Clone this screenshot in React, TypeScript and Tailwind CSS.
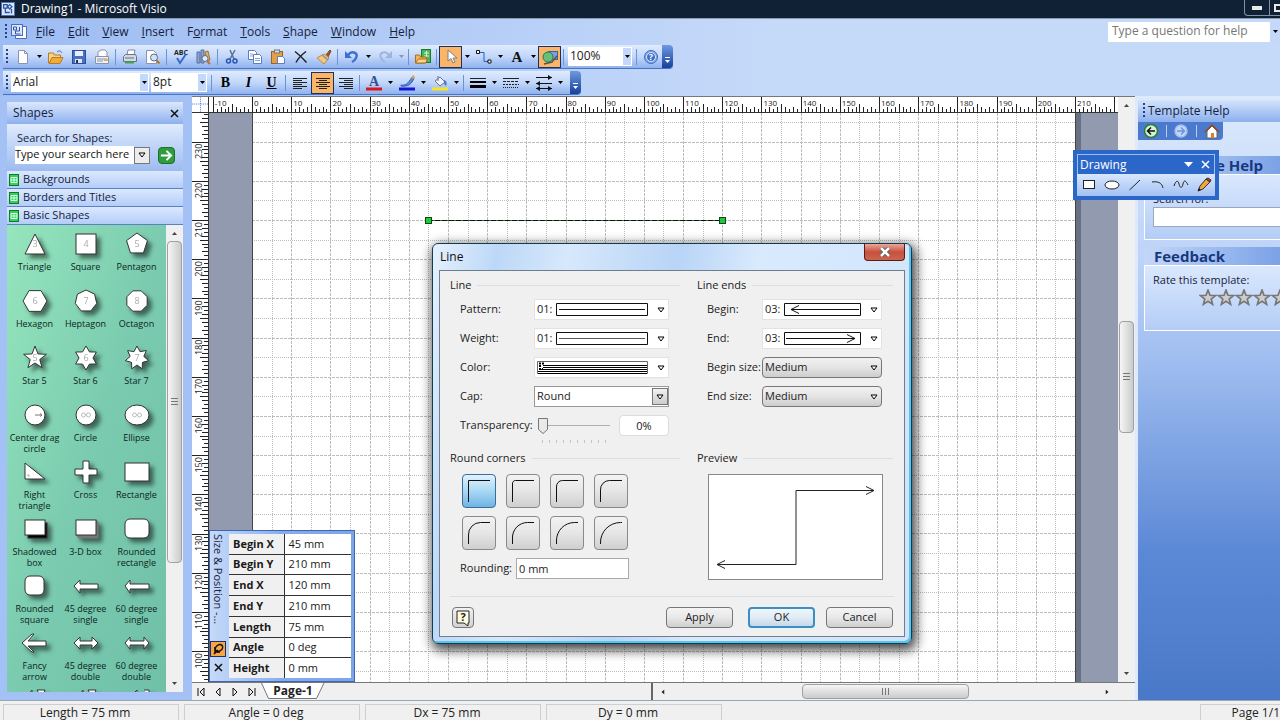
import type { ReactNode } from 'react';
import clsx from 'clsx';

const menus = ['File', 'Edit', 'View', 'Insert', 'Format', 'Tools', 'Shape', 'Window', 'Help'];

const ngon = (n: number, r = 11, cx = 16, cy = 16, offset = -90) =>
  Array.from({ length: n }, (_, i) => {
    const a = ((offset + (360 / n) * i) * Math.PI) / 180;
    return `${(cx + r * Math.cos(a)).toFixed(2)},${(cy + r * Math.sin(a)).toFixed(2)}`;
  }).join(' ');

const star = (n: number, outer: number, inner: number) =>
  Array.from({ length: n * 2 }, (_, i) => {
    const r = i % 2 ? inner : outer;
    const a = ((-90 + (180 / n) * i) * Math.PI) / 180;
    return `${(16 + r * Math.cos(a)).toFixed(2)},${(16 + r * Math.sin(a)).toFixed(2)}`;
  }).join(' ');

const Num = ({ children }: { children: ReactNode }) => (
  <text x="16" y="19" textAnchor="middle" fontSize="9" fill="#aaa" stroke="none">
    {children}
  </text>
);

const masters: { label: string; art: ReactNode }[] = [
  { label: 'Triangle', art: <><polygon points="16,6 26,26 6,26" /><Num>3</Num></> },
  { label: 'Square', art: <><rect x="6" y="6" width="20" height="20" /><Num>4</Num></> },
  { label: 'Pentagon', art: <><polygon points={ngon(5)} /><Num>5</Num></> },
  { label: 'Hexagon', art: <><polygon points={ngon(6, 12, 16, 16, 0)} /><Num>6</Num></> },
  { label: 'Heptagon', art: <><polygon points={ngon(7)} /><Num>7</Num></> },
  { label: 'Octagon', art: <><polygon points={ngon(8, 11, 16, 16, 22.5)} /><Num>8</Num></> },
  { label: 'Star 5', art: <><polygon points={star(5, 12, 5)} /><Num>5</Num></> },
  { label: 'Star 6', art: <><polygon points={star(6, 12, 7)} /><Num>6</Num></> },
  { label: 'Star 7', art: <><polygon points={star(7, 12, 7)} /><Num>7</Num></> },
  { label: 'Center drag\ncircle', art: <><circle cx="16" cy="16" r="10" /><path d="M16 16h7M21 14.500l2 1.500-2 1.500" stroke="#777" /></> },
  { label: 'Circle', art: <><circle cx="16" cy="16" r="10" /><g stroke="#bbb"><circle cx="13.500" cy="16" r="2" /><circle cx="18.500" cy="16" r="2" /></g></> },
  { label: 'Ellipse', art: <><ellipse cx="16" cy="16" rx="12" ry="10" /><g stroke="#bbb"><circle cx="13.500" cy="16" r="2" /><circle cx="18.500" cy="16" r="2" /></g></> },
  { label: 'Right\ntriangle', art: <><path d="M6 7v16h20Z" /><path d="M8 19h2v2" stroke="#aaa" /></> },
  { label: 'Cross', art: <path d="M13 5h6v8h8v6h-8v8h-6v-8H5v-6h8Z" /> },
  { label: 'Rectangle', art: <rect x="4" y="7" width="24" height="18" /> },
  { label: 'Shadowed\nbox', art: <><rect x="9" y="10" width="19" height="15" fill="#000" /><rect x="6" y="7" width="20" height="15" /></> },
  { label: '3-D box', art: <><path d="M6 22l3 3h19V9l-2-2Z" fill="#777" stroke="#777" /><rect x="6" y="7" width="20" height="15" /></> },
  { label: 'Rounded\nrectangle', art: <rect x="4" y="6" width="24" height="19" rx="5" /> },
  { label: 'Rounded\nsquare', art: <rect x="6" y="6" width="19" height="19" rx="5" /> },
  { label: '45 degree\nsingle', art: <path d="M4 16l6-6v4h18v5H10v4Z" /> },
  { label: '60 degree\nsingle', art: <path d="M4 16l5-6v4h19v5H9v4Z" /> },
  { label: 'Fancy\narrow', art: <path d="M3 16l10-9h2l-6 7h18v5H9l6 6h-2Z" /> },
  { label: '45 degree\ndouble', art: <path d="M4 16l6-6v4h12v-4l6 6-6 6v-4H10v4Z" /> },
  { label: '60 degree\ndouble', art: <path d="M4 16l5-6v4h14v-4l5 6-5 6v-4H9v4Z" /> },
  { label: '', art: <path d="M7 14l6-8v9M18 6h8l-3 8Z" /> },
  { label: '', art: <path d="M7 14l6-8v9M18 6h8l-3 8Z" /> },
  { label: '', art: <path d="M10 12l6-6v5M23 6h5v6" /> },
];

const sizeRows = [
  ['Begin X', '45 mm'],
  ['Begin Y', '210 mm'],
  ['End X', '120 mm'],
  ['End Y', '210 mm'],
  ['Length', '75 mm'],
  ['Angle', '0 deg'],
  ['Height', '0 mm'],
];

const statusCells = ['Length = 75 mm', 'Angle = 0 deg', 'Dx = 75 mm', 'Dy = 0 mm'];

// pixels per millimetre on the drawing surface
const MM = 3.919;

const Caret = ({ className }: { className?: string }) => (
  <svg viewBox="0 0 7 4" className={clsx('h-1 w-[7px] shrink-0', className)}>
    <path d="M1 0h5L3.500 3Z" fill="currentColor" />
  </svg>
);

const OpenCaret = ({ className }: { className?: string }) => (
  <svg viewBox="0 0 8 6" className={clsx('h-1.5 w-2 shrink-0', className)}>
    <path d="M1 1h6L4 5Z" fill="#fff" stroke="#000" />
  </svg>
);

const Grip = () => (
  <svg viewBox="0 0 2 16" className="mx-[3px] h-4 w-0.5 shrink-0">
    <path d="M1 0v16" stroke="#27437d" strokeWidth="2" strokeDasharray="2 2" />
  </svg>
);

const Sep = () => (
  <div className="flex w-[5px] shrink-0 justify-center">
    <div className="h-4 w-px bg-[#6f93d2]" />
  </div>
);

const Tool = ({ name, active, children }: { name: string; active?: boolean; children: ReactNode }) => (
  <button
    aria-label={name}
    className={clsx(
      'flex h-[22px] w-[23px] shrink-0 items-center justify-center',
      active && 'border border-[#1c2f66] bg-[#fbb566]',
    )}
  >
    <svg viewBox="0 0 16 16" className="size-4 shrink-0" fill="none" stroke="#222">
      {children}
    </svg>
  </button>
);

const Drop = ({ name, dim }: { name: string; dim?: boolean }) => (
  <button
    aria-label={name}
    className={clsx('flex h-[22px] w-2.5 shrink-0 items-center justify-center', dim ? 'text-[#8796b5]' : 'text-black')}
  >
    <Caret />
  </button>
);

const BarCombo = ({ name, value, className }: { name: string; value: string; className: string }) => (
  <div className={clsx('relative h-[19px] shrink-0 bg-white', className)}>
    <select
      aria-label={name}
      className="block h-[17px] w-full appearance-none bg-transparent px-0.5 py-0 text-xs leading-4 text-[#222] outline-none"
    >
      <option>{value}</option>
    </select>
    <div className="pointer-events-none absolute inset-y-0 right-0 flex w-2.5 items-center justify-center border border-white bg-[#c3d8fa]">
      <Caret />
    </div>
  </div>
);

const BarEnd = () => (
  <div className="ml-auto flex w-[11px] shrink-0 flex-col items-center justify-end gap-0.5 self-stretch rounded-r-sm bg-gradient-to-b from-[#7098e0] to-[#16409b] pb-1 text-white">
    <div className="h-px w-[5px] bg-white" />
    <Caret />
  </div>
);

const barClass =
  'flex h-6 items-center rounded-r-sm border-b border-[#4a73c4] bg-gradient-to-b from-[#dfebfe] via-[#c2d7fa] to-[#8fb2ee]';

const StandardBar = () => (
  <div className={clsx(barClass, 'w-[670px]')}>
    <Grip />
    <Tool name="New">
      <path d="M3.500 1.500h6l3 3v10h-9Z" fill="#fff" stroke="#8a94ab" />
      <path d="M9.500 1.500v3h3" stroke="#8a94ab" />
    </Tool>
    <Drop name="New options" />
    <Tool name="Open">
      <path d="M.5 14V4h5l1 2h6v3" fill="#f6d487" stroke="#b87a1f" />
      <path d="M1 14.500l3-6h11l-3 6Z" fill="#f3a93c" stroke="#b87a1f" />
      <path d="M9 3c2-2 4-1 5 1" stroke="#3b67b8" />
    </Tool>
    <Tool name="Save">
      <rect x="1.500" y="1.500" width="13" height="13" fill="#4870c4" stroke="#2d4f9b" />
      <rect x="4" y="2" width="8" height="5" fill="#e8effc" stroke="none" />
      <rect x="4" y="10" width="7" height="4" fill="#dfe4ee" stroke="none" />
      <rect x="5" y="11" width="2" height="3" fill="#234" stroke="none" />
    </Tool>
    <Tool name="Mail">
      <path d="M1.500 7.500h13v7h-13Z" fill="#eef1f8" stroke="#8993ab" />
      <path d="M4 7V3l3-2h4l2 2v4" fill="#fff" stroke="#8993ab" />
      <path d="M3 10h10M3 12h6" stroke="#8993ab" />
      <path d="M10 11h4" stroke="#e2b252" strokeWidth="2" />
    </Tool>
    <Sep />
    <Tool name="Print">
      <path d="M5 6l1-5h7l-1 5" fill="#fff" stroke="#7d89a3" />
      <path d="M1.500 7.500l2-2h10l1 2v5h-13Z" fill="#d4d8e2" stroke="#66718a" />
      <path d="M3 13.500h9" stroke="#3ca54a" strokeWidth="2" />
      <path d="M3 9h9" stroke="#66718a" />
    </Tool>
    <Tool name="Print Preview">
      <path d="M1.500 1.500h7l3 3v10h-10Z" fill="#fff" stroke="#8a94ab" />
      <circle cx="9" cy="8.500" r="3.500" fill="#cfe3fb" stroke="#5c6c8f" />
      <path d="M11.500 11.500l3 3" stroke="#b9712d" strokeWidth="2" />
    </Tool>
    <Sep />
    <Tool name="Spelling">
      <text x="8" y="6" textAnchor="middle" fontSize="7" fontWeight="700" fill="#222" stroke="none">ABC</text>
      <path d="M4 9l3 5 6-9" stroke="#3a68c9" strokeWidth="2" />
    </Tool>
    <Tool name="Research">
      <path d="M1 3h3v11H1ZM5 1h3v13H5Z" fill="#8aa3cf" stroke="#5a6f9c" />
      <path d="M9 3l3-1 2 9-3 1Z" fill="#e0b06a" stroke="#9b7438" />
      <circle cx="9" cy="9.500" r="3" fill="#dbe9fb" stroke="#5c6c8f" />
      <path d="M11 12l3 3" stroke="#b9712d" strokeWidth="2" />
    </Tool>
    <Sep />
    <Tool name="Cut">
      <path d="M6 1l4 9M11 1l-5 9" stroke="#5b6f98" strokeWidth="1.500" />
      <circle cx="4.500" cy="12" r="2" stroke="#2a55b5" strokeWidth="1.500" />
      <circle cx="11" cy="12" r="2" stroke="#2a55b5" strokeWidth="1.500" />
    </Tool>
    <Tool name="Copy">
      <path d="M1.500 1.500h6l2 2v7h-8Z" fill="#fff" stroke="#5f7db8" />
      <path d="M6.500 5.500h6l2 2v7h-8Z" fill="#fff" stroke="#5f7db8" />
      <path d="M3 5h3M3 7h3M8 9.500h5M8 11.500h5" stroke="#86a2dc" />
    </Tool>
    <Tool name="Paste">
      <rect x="1.500" y="2.500" width="11" height="12" fill="#e2a049" stroke="#9c6320" />
      <rect x="4.500" y="1" width="5" height="3" fill="#d9dbe2" stroke="#777" />
      <path d="M7.500 7.500h5l2 2v5h-7Z" fill="#fff" stroke="#5f7db8" />
    </Tool>
    <Tool name="Delete">
      <path d="M2 2.500c4 3 8 7 11.500 11M13 2.500c-4 3-8 7-10 11" stroke="#222" strokeWidth="1.500" />
    </Tool>
    <Tool name="Format Painter">
      <path d="M10 6l4-5 1 1-3 6" fill="#9b5c25" stroke="#7b4719" />
      <path d="M8 5l5 4-5 6-7-6Z" fill="#f3c878" stroke="#c38b3b" />
      <path d="M6 6l6 5" stroke="#8291b3" strokeWidth="1.500" />
    </Tool>
    <Sep />
    <Tool name="Undo">
      <path d="M4 6c4-5 11-2 8 3-1 2-2 3-4 4" stroke="#3f6fd0" strokeWidth="2.500" />
      <path d="M1 2v7h7Z" fill="#3f6fd0" stroke="none" />
    </Tool>
    <Drop name="Undo options" />
    <Tool name="Redo">
      <path d="M12 6c-4-5-11-2-8 3 1 2 2 3 4 4" stroke="#9fb4da" strokeWidth="2" />
      <path d="M15 2v7H8Z" fill="#9fb4da" stroke="none" />
    </Tool>
    <Drop name="Redo options" dim />
    <Sep />
    <Tool name="Shapes">
      <rect x="6.500" y=".5" width="9" height="13" fill="#49b857" stroke="#1d7a2c" />
      <path d="M9 4h5M9 7h5M11.500 2v7" stroke="#dff5e2" />
      <path d="M.5 14V6h4l1 2h6l-1 6Z" fill="#f3b455" stroke="#a96e1d" />
      <path d="M.5 14l3-4h9l-2 4Z" fill="#fad590" stroke="#a96e1d" />
    </Tool>
    <Sep />
    <Tool name="Pointer Tool" active>
      <path d="M5 1v11l3-2.500 2 4.500 2-1-2-4h4Z" fill="#fff" stroke="#7c7f8c" />
    </Tool>
    <Drop name="Pointer options" />
    <Tool name="Connector Tool">
      <path d="M4 3.500h4v9h4" stroke="#2b5ec4" />
      <path d="M.5 1.500h3v3h-3ZM12 11h3v3h-3Z" fill="#fff" stroke="#111" />
    </Tool>
    <Drop name="Connector options" />
    <Tool name="Text Tool">
      <text x="8" y="13" textAnchor="middle" fontFamily="Liberation Serif, serif" fontWeight="700" fontSize="15" fill="#111" stroke="none">A</text>
    </Tool>
    <Drop name="Text options" />
    <Tool name="Drawing Tools" active>
      <rect x="6.500" y="2.500" width="9" height="8" fill="#7d9fdf" stroke="#3c5fa8" />
      <circle cx="6" cy="8" r="5" fill="#66bf7c" stroke="#2c7b42" />
      <path d="M2 15l8-2 5-6" stroke="#555" strokeWidth="1.500" />
    </Tool>
    <Sep />
    <BarCombo name="Zoom" value="100%" className="mx-0.5 w-16" />
    <Sep />
    <Tool name="Help">
      <circle cx="8" cy="8" r="6.500" fill="#7fa6ea" stroke="#416cc0" />
      <circle cx="8" cy="8" r="4.500" fill="#3f6dca" stroke="#dce8fc" />
      <text x="8" y="11" textAnchor="middle" fontSize="9" fontWeight="700" fill="#fff" stroke="none">?</text>
    </Tool>
    <BarEnd />
  </div>
);

const FormattingBar = () => (
  <div className={clsx(barClass, 'w-[578px]')}>
    <Grip />
    <BarCombo name="Font" value="Arial" className="w-[138px]" />
    <BarCombo name="Font Size" value="8pt" className="ml-0.5 mr-0.5 w-14" />
    <Sep />
    <button className="w-[23px] shrink-0 text-sm font-bold [font-family:'Liberation_Serif',serif]">B</button>
    <button className="w-[23px] shrink-0 text-sm font-bold italic [font-family:'Liberation_Serif',serif]">I</button>
    <button className="w-[23px] shrink-0 text-sm font-bold underline [font-family:'Liberation_Serif',serif]">U</button>
    <Sep />
    <Tool name="Align Left">
      <path d="M1 3.500h14M1 5.500h9M1 7.500h14M1 9.500h9M1 11.500h14M1 13.500h9" />
    </Tool>
    <Tool name="Align Center" active>
      <path d="M1 3.500h14M4 5.500h8M1 7.500h14M4 9.500h8M1 11.500h14M4 13.500h8" />
    </Tool>
    <Tool name="Align Right">
      <path d="M1 3.500h14M6 5.500h9M1 7.500h14M6 9.500h9M1 11.500h14M6 13.500h9" />
    </Tool>
    <Sep />
    <Tool name="Text Color">
      <text x="8" y="11" textAnchor="middle" fontFamily="Liberation Serif, serif" fontSize="14" fontWeight="700" fill="#33508f" stroke="none">A</text>
      <path d="M0 14h16" stroke="#e01515" strokeWidth="3" />
    </Tool>
    <Drop name="Text color options" />
    <Tool name="Line Color">
      <path d="M2 10c4 1 7-1 11-8l2 1c-2 6-6 9-13 8Z" fill="#5c8be0" stroke="#345fb2" />
      <path d="M12 3l2-3 2 2-2 2" fill="#dca050" stroke="none" />
      <path d="M0 14h16" stroke="#1414dc" strokeWidth="3" />
    </Tool>
    <Drop name="Line color options" />
    <Tool name="Fill Color">
      <path d="M3 6l5-4 5 5-5 4Z" fill="#eef2fa" stroke="#68738f" />
      <path d="M6 6V1" stroke="#68738f" />
      <path d="M12 5c3 1 3 3 2 6-2-1-2-3-2-6Z" fill="#4674cf" stroke="none" />
      <path d="M0 14h16" stroke="#f6e227" strokeWidth="3" />
    </Tool>
    <Drop name="Fill color options" />
    <Sep />
    <Tool name="Line Weight">
      <path d="M0 3.500h16" />
      <path d="M0 7h16" strokeWidth="2" stroke="#000" />
      <path d="M0 11.500h16" strokeWidth="3" stroke="#000" />
    </Tool>
    <Drop name="Line weight options" />
    <Tool name="Line Pattern">
      <path d="M0 3.500h16" />
      <path d="M0 6.500h16" strokeDasharray="3 1" />
      <path d="M0 9.500h16" strokeDasharray="2 1" />
      <path d="M0 12.500h16" strokeDasharray="1 1" />
    </Tool>
    <Drop name="Line pattern options" />
    <Tool name="Line Ends">
      <path d="M0 2.500h16M0 8.500h16M0 13.500h16" stroke="#111" />
      <path d="M12 0v5l4-2.500ZM4 6v5L0 8.500ZM4 11v5l-4-2.500ZM12 11v5l4-2.500Z" fill="#111" stroke="none" />
    </Tool>
    <Drop name="Line ends options" />
    <BarEnd />
  </div>
);

const StencilIcon = () => (
  <svg viewBox="0 0 10 12" className="h-3 w-2.5">
    <rect x=".5" y=".5" width="9" height="11" fill="#2fd35c" stroke="#0d7a2b" />
    <path d="M2 3.500h6v5H2ZM5 3.500v5M2 6h6" stroke="#e4ffe9" fill="none" />
  </svg>
);

const VScroll = ({ thumb }: { thumb: string }) => (
  <div className="flex w-[17px] shrink-0 flex-col items-center bg-[#f0f0f0] text-[#444]">
    <div className="flex h-4 items-center">
      <Caret className="rotate-180" />
    </div>
    <div className={clsx('flex w-[15px] items-center justify-center rounded-sm border border-[#a0a0a0] bg-gradient-to-r from-[#f6f6f6] to-[#cbcbcb]', thumb)}>
      <svg viewBox="0 0 7 8" className="h-2 w-[7px]">
        <path d="M0 .5h7M0 3.500h7M0 6.500h7" stroke="#777" />
      </svg>
    </div>
    <div className="mt-auto flex h-4 items-center">
      <Caret />
    </div>
  </div>
);

const ShapesPanel = () => (
  <aside className="flex w-44 shrink-0 flex-col">
    <header className="flex h-[22px] shrink-0 items-center justify-between bg-gradient-to-b from-[#dbe8fd] to-[#8db0ee] pl-1.5 pr-1 text-xs text-[#16233d]">
      <span>Shapes</span>
      <button aria-label="Close Shapes">
        <svg viewBox="0 0 9 9" className="size-[9px]">
          <path d="M1 1l7 7M8 1L1 8" stroke="#111" strokeWidth="1.500" />
        </svg>
      </button>
    </header>
    <div className="flex h-[47px] shrink-0 flex-col bg-gradient-to-b from-[#dfebfe] to-[#9dbbf0] px-2 pt-1.5">
      <label htmlFor="shape-search" className="px-0.5 text-[11px] leading-4 text-[#16233d]">
        Search for Shapes:
      </label>
      <div className="flex h-[18px] items-center">
        <input
          id="shape-search"
          defaultValue="Type your search here"
          className="h-[18px] w-[119px] bg-white pb-1 text-[11px] leading-[14px] text-[#111] outline-none"
        />
        <button aria-label="Recent searches" className="flex h-[17px] w-4 items-center justify-center border border-[#777] bg-[#ececec]">
          <OpenCaret />
        </button>
        <button aria-label="Search" className="ml-2 size-[17px] rounded-sm border border-[#1c6e28] bg-[#2f9d3e]">
          <svg viewBox="0 0 16 16" className="size-full" fill="none" stroke="#fff" strokeWidth="2">
            <path d="M2 8h11M8 3l5 5-5 5" />
          </svg>
        </button>
      </div>
    </div>
    {['Backgrounds', 'Borders and Titles', 'Basic Shapes'].map((name) => (
      <button
        key={name}
        className="flex h-[18px] shrink-0 items-center gap-1 border-b border-[#5b80c4] bg-gradient-to-b from-[#dce9fe] to-[#b3cdf8] px-0.5 text-[11px] text-[#14223c]"
      >
        <StencilIcon />
        {name}
      </button>
    ))}
    <div className="flex min-h-0 flex-1">
      <ul className="grid min-w-0 flex-1 auto-rows-[57px] grid-cols-3 overflow-hidden bg-gradient-to-br from-[#95e6bd] via-[#7bcbb0] to-[#70c0a8] pl-0.5 pr-1">
        {masters.map((m, i) => (
          <li key={i} className="flex flex-col items-center pt-[3px]">
            <svg
              viewBox="0 0 32 32"
              className="size-8 shrink-0 overflow-visible drop-shadow-[4px_4px_2px_rgba(0,0,0,0.5)]"
              fill="#fff"
              stroke="#333"
            >
              {m.art}
            </svg>
            <span className="whitespace-pre pt-px text-center text-[9px] leading-[11px] text-[#0c241c]">{m.label}</span>
          </li>
        ))}
      </ul>
      <VScroll thumb="h-[322px]" />
    </div>
  </aside>
);

const HRuler = () => (
  <svg width="100%" height="100%" stroke="#222" className="block" shapeRendering="crispEdges">
    {Array.from({ length: 231 }, (_, i) => {
      const mm = i - 10;
      const x = 43.5 + mm * MM;
      const len = mm % 10 === 0 ? 16 : mm % 5 === 0 ? 9 : i % 2 ? 4 : 6;
      return <path key={mm} d={`M${x} ${16 - len}V16`} />;
    })}
    {Array.from({ length: 23 }, (_, i) => (
      <text key={i} x={45 + (i - 1) * 10 * MM} y="9" fontSize="8" fill="#222" stroke="none">
        {(i - 1) * 10}
      </text>
    ))}
  </svg>
);

const VRuler = () => (
  <svg width="100%" height="100%" stroke="#222" className="block" shapeRendering="crispEdges">
    {Array.from({ length: 150 }, (_, i) => {
      const mm = 238 - i;
      const y = 107.5 + (210 - mm) * MM;
      const len = mm % 10 === 0 ? 17 : mm % 5 === 0 ? 9 : i % 2 ? 5 : 7;
      return <path key={mm} d={`M${17 - len} ${y}H17`} />;
    })}
    {Array.from({ length: 14 }, (_, i) => {
      const mm = 230 - i * 10;
      const y = 109 + (210 - mm) * MM;
      return (
        <text key={mm} transform={`translate(10 ${y}) rotate(-90)`} textAnchor="end" fontSize="9" fill="#222" stroke="none">
          {mm}
        </text>
      );
    })}
  </svg>
);

const Canvas = () => (
  <svg width="100%" height="100%" className="block bg-[#929ab0]" shapeRendering="crispEdges">
    <rect x="866" width="6" height="100%" fill="#6a7084" />
    <rect x="43" width="823" height="100%" fill="#fff" />
    {Array.from({ length: 41 }, (_, i) => {
      const x = 43.5 + (i + 1) * 5 * MM;
      return <line key={i} x1={x} x2={x} y1="0" y2="100%" stroke="#bdbdbd" strokeDasharray={i % 2 ? '3 1' : '1 1'} />;
    })}
    {Array.from({ length: 29 }, (_, i) => {
      const y = 9.5 + i * 5 * MM;
      return <line key={i} x1="43" x2="866" y1={y} y2={y} stroke="#bdbdbd" strokeDasharray={i % 2 ? '3 1' : '1 1'} />;
    })}
    <path d="M43.500 0V1000M866.500 0V1000" stroke="#444" />
    <path d="M219 107.500H514" stroke="#1a7a2a" />
    <path d="M219 107.500H514" stroke="#111" strokeDasharray="5 2" />
    <path d="M216.500 104.500h6v6h-6ZM510.500 104.500h6v6h-6Z" fill="#1fc83c" stroke="#0b4a16" />
  </svg>
);

const SizePosition = () => (
  <section className="absolute bottom-0 left-0 flex h-[152px] w-[146px] border border-[#3f66b5] bg-gradient-to-r from-[#c6daf9] via-[#86adeb] to-[#7ba5e8] py-[3px] pr-[3px]">
    <div className="flex w-4 flex-col items-center justify-between">
      <h2 className="text-[11px] leading-4 text-[#16233d] [writing-mode:vertical-rl]">Size &amp; Position -...</h2>
      <button aria-label="Auto hide" className="mt-auto flex size-4 shrink-0 items-center justify-center border border-[#1c2f66] bg-[#f7a544]">
        <svg viewBox="0 0 12 12" className="size-3" fill="none" stroke="#111" strokeWidth="1.500">
          <ellipse cx="7" cy="5" rx="4" ry="3" transform="rotate(-40 7 5)" />
          <path d="M2 11l4-4M3 4v5h5" />
        </svg>
      </button>
      <button aria-label="Close" className="my-1.5">
        <svg viewBox="0 0 9 9" className="size-[9px]">
          <path d="M1 1l7 7M8 1L1 8" stroke="#111" strokeWidth="1.500" />
        </svg>
      </button>
    </div>
    <table className="ml-[3px] flex-1 border-collapse bg-white text-[11px] leading-4 text-[#1a1a1a]">
      <tbody>
        {sizeRows.map(([label, value]) => (
          <tr key={label} className="border-b border-[#333] last:border-b-0">
            <th scope="row" className="w-[55px] border-r border-[#333] bg-[#f0f0f0] px-1 py-0 text-left font-bold">
              {label}
            </th>
            <td className="px-1 py-0">{value}</td>
          </tr>
        ))}
      </tbody>
    </table>
  </section>
);

const PageTabs = () => (
  <div className="flex h-[18px] shrink-0 items-stretch border-t border-[#777] bg-[#f0f0f0]">
    <div className="flex w-[69px] items-center justify-around">
      {['M2 1v8M8 1v8L4 5Z', 'M7 1v8L3 5Z', 'M3 1v8l4-4Z', 'M8 1v8M2 1v8l4-4Z'].map((d, i) => (
        <button key={d} aria-label={['First page', 'Previous page', 'Next page', 'Last page'][i]}>
          <svg viewBox="0 0 10 10" className="size-2.5" fill="none" stroke="#111">
            <path d={d} />
          </svg>
        </button>
      ))}
    </div>
    <button className="relative h-4 w-16 text-xs font-bold leading-4 text-[#222]">
      <svg viewBox="0 0 64 16" className="absolute inset-0 size-full">
        <path d="M.5 0l7 15.500h48L63 0" fill="#fff" stroke="#777" />
      </svg>
      <span className="relative">Page-1</span>
    </button>
    <div className="ml-auto flex w-[466px] items-center border-l-2 border-[#666] px-1.5 text-[#222]">
      <Caret className="rotate-90" />
      <div className="ml-[136px] flex h-[15px] w-[167px] items-center justify-center rounded-sm border border-[#a0a0a0] bg-gradient-to-b from-[#f6f6f6] to-[#cbcbcb]">
        <svg viewBox="0 0 8 7" className="h-[7px] w-2">
          <path d="M.5 0v7M3.500 0v7M6.500 0v7" stroke="#777" />
        </svg>
      </div>
      <Caret className="ml-auto -rotate-90" />
    </div>
    <div className="w-[18px]" />
  </div>
);

const Pane = ({ title, children }: { title: string; children: ReactNode }) => (
  <section className="ml-1.5">
    <h2 className="h-[18px] bg-gradient-to-r from-[#c3d7f8] to-[#7ba2e6] pl-2.5 text-[15px] font-bold leading-[18px] text-[#17377f]">
      {title}
    </h2>
    <div className="h-[66px] border-y border-l border-white bg-gradient-to-b from-[#dae8fd] to-[#b4cdf6] pl-2 text-[11px] text-[#16233d]">
      {children}
    </div>
  </section>
);

const TaskPane = () => (
  <aside className="flex min-w-0 flex-1 flex-col overflow-hidden border-l-[3px] border-[#dce9fe] bg-[linear-gradient(#dceafc,#b9d0f7_30%,#a3c0f1_42%,#5c89d6_75%,#4a78c8)]">
    <header className="mt-1 flex h-[22px] shrink-0 items-center bg-gradient-to-b from-[#d5e4fc] to-[#8bafee] pl-0.5 text-xs text-[#16233d]">
      <Grip />
      Template Help
    </header>
    <div className="flex h-[18px] w-[85px] shrink-0 items-center justify-around rounded-br bg-[#4b79cb] pl-0.5">
      <button aria-label="Back">
        <svg viewBox="0 0 16 16" className="size-4" fill="none" stroke="#111" strokeWidth="1.500">
          <circle cx="8" cy="8" r="6.500" fill="#d7f2d4" stroke="#2b7d35" />
          <path d="M12 8H5M8 4.500L4.500 8 8 11.500" />
        </svg>
      </button>
      <div className="h-3 w-px bg-[#b8cff5]" />
      <button aria-label="Forward">
        <svg viewBox="0 0 16 16" className="size-4" fill="none" stroke="#6d93d8" strokeWidth="1.500">
          <circle cx="8" cy="8" r="6" fill="#c4d6f5" stroke="#a4bfed" />
          <path d="M4 8h7M8 4.500L11.500 8 8 11.500" />
        </svg>
      </button>
      <div className="h-3 w-px bg-[#b8cff5]" />
      <button aria-label="Home">
        <svg viewBox="0 0 16 16" className="size-4">
          <path d="M3 8v7h10V8L8 3Z" fill="#fff" stroke="#666" />
          <path d="M1 9l7-7 7 7" fill="none" stroke="#8f4c24" strokeWidth="1.500" />
          <path d="M7 10h3v5H7Z" fill="#d9822d" />
        </svg>
      </button>
    </div>
    <div className="mt-4 flex flex-col gap-[7px]">
      <Pane title="Template Help">
        <label htmlFor="help-search" className="block pt-4 leading-4">
          Search for:
        </label>
        <input id="help-search" className="h-5 w-full border border-r-0 border-[#9aa7bf] bg-white px-1" />
      </Pane>
      <Pane title="Feedback">
        <p className="pt-1.5 leading-4">Rate this template:</p>
        <div className="ml-[46px] mt-px flex w-[90px]">
          {[1, 2, 3, 4, 5].map((n) => (
            <button key={n} aria-label={`${n} stars`} className="w-[18px] shrink-0">
              <svg viewBox="0 0 32 32" className="size-[18px]">
                <polygon points={star(5, 14, 6)} fill="#cdcdcd" stroke="#777" strokeWidth="3" />
              </svg>
            </button>
          ))}
        </div>
      </Pane>
    </div>
  </aside>
);

const DrawingToolbar = () => (
  <section className="absolute left-[1073px] top-[150px] w-[146px] border-4 border-[#2b66c9] bg-[#2b66c9]">
    <header className="flex h-5 items-center justify-between border border-b-0 border-[#9fbff2] pl-0.5 pr-1 text-xs text-white">
      <span>Drawing</span>
      <div className="flex items-center gap-2">
        <svg viewBox="0 0 9 5" className="h-[5px] w-[9px]">
          <path d="M0 0h9L4.500 5Z" fill="#fff" />
        </svg>
        <button aria-label="Close Drawing">
          <svg viewBox="0 0 9 9" className="size-[9px]">
            <path d="M1 1l7 7M8 1L1 8" stroke="#fff" strokeWidth="1.500" />
          </svg>
        </button>
      </div>
    </header>
    <div className="flex bg-gradient-to-b from-[#d8e7fd] to-[#a3c1f3]">
      <Tool name="Rectangle Tool"><rect x="2.500" y="3.500" width="11" height="8" fill="#fff" /></Tool>
      <Tool name="Ellipse Tool"><ellipse cx="8" cy="8" rx="7" ry="4" fill="#fff" /></Tool>
      <Tool name="Line Tool"><path d="M2.500 13L13 3" /></Tool>
      <Tool name="Arc Tool"><path d="M2 5c6-1 10 1 11 6" /></Tool>
      <Tool name="Freeform Tool"><path d="M1 9c2-6 4-6 5-2s3 5 4 0 3-3 5 1" /></Tool>
      <Tool name="Pencil Tool">
        <path d="M2 14l2-5 6-7 4 3-7 7Z" fill="#f0a53b" stroke="#333" />
        <path d="M10 2l2-1 3 2-1 2Z" fill="#c33" stroke="#333" />
        <path d="M2 14l1-3 2 2Z" fill="#111" stroke="none" />
      </Tool>
    </div>
  </section>
);

const Group = ({ title, children }: { title: string; children?: ReactNode }) => (
  <fieldset className="min-w-0">
    <legend className="flex h-4 w-full items-center gap-1.5 leading-4">
      {title}
      <span className="h-px flex-1 bg-[#d5dfe8]" />
    </legend>
    {children}
  </fieldset>
);

const Row = ({ id, label, width, children }: { id: string; label: string; width: string; children: ReactNode }) => (
  <div className="flex h-[21px] items-center">
    <label htmlFor={id} className={clsx('shrink-0 whitespace-nowrap', width)}>
      {label}
    </label>
    {children}
  </div>
);

const Combo = ({
  id,
  value,
  look,
  width,
  art,
}: {
  id: string;
  value: string;
  look: 'plain' | 'edit' | 'button';
  width: string;
  art?: ReactNode;
}) => (
  <div className={clsx('relative h-[21px] shrink-0', width)}>
    <select
      id={id}
      className={clsx(
        'block size-full appearance-none px-0.5 text-[11px] text-[#222] outline-none',
        look === 'plain' && 'border border-[#e2e2e2] bg-white',
        look === 'edit' && 'border border-[#999] bg-white',
        look === 'button' && 'rounded-sm border border-[#777] bg-gradient-to-b from-[#f2f2f2] via-[#e4e4e4] to-[#cdcdcd]',
      )}
    >
      <option>{value}</option>
    </select>
    <div className="pointer-events-none absolute inset-0 flex items-center justify-end">
      {art}
      <div
        className={clsx(
          'flex w-4 items-center justify-center',
          look === 'edit' && 'mr-px h-[17px] border border-[#777] bg-gradient-to-b from-[#f2f2f2] to-[#cdcdcd]',
        )}
      >
        <OpenCaret />
      </div>
    </div>
  </div>
);

const corners = [0, 3, 6, 9, 12, 15, 18, 20];

const LineDialog = () => (
  <section
    role="dialog"
    aria-label="Line"
    className="absolute left-[432px] top-[243px] w-[480px] rounded-md border border-[#123c50] bg-[linear-gradient(100deg,#e6f1fd,#bcd8f7_12%,#d7e8fb_25%,#b8d4f6_45%,#d9eafd_60%,#cfe3fb)] px-1.5 pb-1.5 text-[11px] text-[#222] shadow-[inset_-2px_-2px_0_#55c4ee,2px_4px_12px_2px_rgba(0,0,0,0.75)]"
  >
    <header className="flex h-[26px] items-start justify-between pl-px text-[#111]">
      <h1 className="pt-[5px] text-xs leading-4">Line</h1>
      <button
        aria-label="Close"
        className="flex h-[17px] w-[41px] items-center justify-center rounded-b border border-t-0 border-[#5e1a14] bg-gradient-to-b from-[#e8a79b] via-[#c8503d] to-[#c9664f]"
      >
        <svg viewBox="0 0 12 10" className="h-2.5 w-3">
          <path d="M2 1l8 8M10 1L2 9" stroke="#555" strokeWidth="4" />
          <path d="M2 1l8 8M10 1L2 9" stroke="#fff" strokeWidth="2.500" />
        </svg>
      </button>
    </header>
    <div className="border border-[#6d7f8f] bg-[#f0f0f0] px-2.5 pb-2 pt-1.5">
      <div className="grid grid-cols-[230px_196px] gap-x-[17px] gap-y-3.5">
        <Group title="Line">
          <div className="mt-1.5 flex flex-col gap-2 pl-2.5">
            <Row id="pattern" label="Pattern:" width="w-[74px]">
              <Combo
                id="pattern"
                value="01:"
                look="plain"
                width="w-[135px]"
                art={<svg viewBox="0 0 93 13" className="mr-1 h-[13px] w-[93px]" fill="none" stroke="#111"><path d="M.5 .5h91v12H.5ZM3 6.500h86" /></svg>}
              />
            </Row>
            <Row id="weight" label="Weight:" width="w-[74px]">
              <Combo
                id="weight"
                value="01:"
                look="plain"
                width="w-[135px]"
                art={<svg viewBox="0 0 93 13" className="mr-1 h-[13px] w-[93px]" fill="none" stroke="#111"><path d="M.5 .5h91v12H.5Z" /><path d="M3 6.500h86" stroke="#555" /></svg>}
              />
            </Row>
            <Row id="color" label="Color:" width="w-[74px]">
              <Combo
                id="color"
                value=""
                look="plain"
                width="w-[135px]"
                art={
                  <svg viewBox="0 0 112 13" className="mr-1 h-[13px] w-28" fill="none" stroke="#000">
                    <path d="M.5 .5h110v12H.5Z" stroke="#666" />
                    <path d="M6 4.500h104M6 6.500h104M4 8.500h106M1 10.500h109M1 12.500h109" />
                    <path d="M2 2.500h5M2 5h2M2 8h4" strokeWidth="2" strokeDasharray="2 1" />
                  </svg>
                }
              />
            </Row>
            <Row id="cap" label="Cap:" width="w-[74px]">
              <Combo id="cap" value="Round" look="edit" width="w-[135px]" />
            </Row>
            <Row id="transparency" label="Transparency:" width="w-[74px]">
              <div className="relative h-full w-[78px]">
                <svg viewBox="0 0 78 28" className="absolute left-0 top-0 h-7 w-[78px]" fill="none">
                  <path d="M5 10.500h71" stroke="#b0b0b0" />
                  <path d="M8 26.500h68" stroke="#c4c4c4" strokeWidth="3" strokeDasharray="1 6" />
                  <path d="M4.500 3.500h9v11l-4.500 4-4.500-4Z" fill="#e9e9e9" stroke="#777" />
                </svg>
                <input id="transparency" type="range" min="0" max="100" defaultValue="0" className="absolute inset-0 size-full cursor-default opacity-0" />
              </div>
              <input
                aria-label="Transparency percent"
                defaultValue="0%"
                className="ml-[7px] h-[21px] w-[50px] rounded-sm border border-[#dcdcdc] bg-white text-center outline-none"
              />
            </Row>
          </div>
        </Group>
        <Group title="Line ends">
          <div className="mt-1.5 flex flex-col gap-2 pl-2.5">
            <Row id="begin" label="Begin:" width="w-[55px]">
              <Combo
                id="begin"
                value="03:"
                look="plain"
                width="w-[120px]"
                art={<svg viewBox="0 0 78 13" className="mr-1 h-[13px] w-[78px]" fill="none" stroke="#111"><path d="M.5 .5h76v12H.5ZM7 6.500h68M15 2.500l-8 4 8 4" /></svg>}
              />
            </Row>
            <Row id="end" label="End:" width="w-[55px]">
              <Combo
                id="end"
                value="03:"
                look="plain"
                width="w-[120px]"
                art={<svg viewBox="0 0 78 13" className="mr-1 h-[13px] w-[78px]" fill="none" stroke="#111"><path d="M.5 .5h76v12H.5ZM2 6.500h69M63 2.500l8 4-8 4" /></svg>}
              />
            </Row>
            <Row id="begin-size" label="Begin size:" width="w-[55px]">
              <Combo id="begin-size" value="Medium" look="button" width="w-[120px]" />
            </Row>
            <Row id="end-size" label="End size:" width="w-[55px]">
              <Combo id="end-size" value="Medium" look="button" width="w-[120px]" />
            </Row>
          </div>
        </Group>
        <Group title="Round corners">
          <div className="mt-2 flex flex-col gap-2 pl-3">
            <div className="grid w-[166px] grid-cols-4 gap-x-2.5 gap-y-2">
              {corners.map((r, i) => (
                <button
                  key={r}
                  aria-label={`Corner style ${i + 1}`}
                  className={clsx(
                    'size-[34px] rounded border',
                    i === 0
                      ? 'border-[#3c6c9c] bg-gradient-to-b from-[#e2f3fd] via-[#a9d8f4] to-[#6db4e4]'
                      : 'border-[#8a8a8a] bg-gradient-to-b from-[#f2f2f2] via-[#e6e6e6] to-[#cfcfcf]',
                  )}
                >
                  <svg viewBox="0 0 32 32" className="size-full" fill="none" stroke="#111">
                    <path d={`M5.500 27V${6 + r}A${r} ${r} 0 0 1 ${5.5 + r} 5.500H27`} />
                  </svg>
                </button>
              ))}
            </div>
            <div className="flex h-[21px] items-center">
              <label htmlFor="rounding" className="-ml-0.5 w-14">
                Rounding:
              </label>
              <input id="rounding" defaultValue="0 mm" className="h-[21px] w-[113px] border border-[#aaa] bg-white px-0.5 outline-none" />
            </div>
          </div>
        </Group>
        <Group title="Preview">
          <svg viewBox="0 0 175 106" className="ml-[11px] mt-2 h-[106px] w-[175px]" fill="none" stroke="#222">
            <rect x=".5" y=".5" width="174" height="105" fill="#fff" stroke="#888" />
            <path d="M9 90.500h79V16.500h78M17 86.500l-8 4 8 4M158 12.500l8 4-8 4" />
          </svg>
        </Group>
      </div>
      <div className="mt-4 flex items-center justify-between border-t border-[#d5dfe8] pt-2.5">
        <button aria-label="Help" className="ml-0.5 flex h-[21px] w-[22px] items-center justify-center rounded-sm border border-[#777] bg-gradient-to-b from-[#f2f2f2] to-[#d2d2d2]">
          <svg viewBox="0 0 16 16" className="size-4">
            <path d="M2 1h12v12h-1v3l-4-3H2Z" fill="#fffbe0" stroke="#222" />
            <text x="8" y="11" textAnchor="middle" fontSize="11" fontWeight="700" fill="#222">?</text>
          </svg>
        </button>
        <div className="flex gap-[15px] pr-px">
          <button className="h-[21px] w-[67px] rounded-sm border border-[#777] bg-gradient-to-b from-[#f4f4f4] via-[#e8e8e8] to-[#cfcfcf]">Apply</button>
          <button className="h-[21px] w-[67px] rounded-sm border-2 border-[#3c8fc4] bg-gradient-to-b from-[#f0f6fb] via-[#e0ebf5] to-[#c6d9ea]">OK</button>
          <button className="-ml-1 h-[21px] w-[67px] rounded-sm border border-[#777] bg-gradient-to-b from-[#f4f4f4] via-[#e8e8e8] to-[#cfcfcf]">Cancel</button>
        </div>
      </div>
    </div>
  </section>
);

const VisioMark = ({ className }: { className?: string }) => (
  <svg viewBox="0 0 16 16" className={clsx('shrink-0', className)}>
    <rect x=".5" y=".5" width="15" height="15" fill="#dbe7fb" stroke="#4a6fb8" />
    <path d="M3 3h4v4H3ZM10 3l2.500 2.500L10 8 7.500 5.500ZM5 7v5h5M12 8v5" fill="none" stroke="#2d56a8" strokeWidth="1.500" />
  </svg>
);

export default function App() {
  return (
    <div className="relative flex h-screen flex-col overflow-hidden bg-[#a3c1f5] [font-family:'Open_Sans','Noto_Sans',sans-serif]">
      <header className="flex h-[19px] shrink-0 items-center gap-1.5 border-b border-[#8b9bb0] bg-[#102136] pl-px text-xs text-white">
        <VisioMark className="size-3.5" />
        <span>Drawing1 - Microsoft Visio</span>
        <div className="ml-auto flex h-4 self-start rounded-bl border-b border-l border-[#8290a3]">
          <button aria-label="Minimize" className="flex w-[25px] items-center justify-center border-r border-[#8290a3]">
            <span className="h-1 w-2.5 bg-[#e8e8e8]" />
          </button>
          <button aria-label="Maximize" className="flex w-2.5 items-center overflow-hidden pl-1">
            <span className="size-2 shrink-0 border-2 border-[#e8e8e8]" />
          </button>
        </div>
      </header>

      <div className="flex h-[77px] shrink-0 flex-col bg-gradient-to-r from-[#9dbcf3] to-[#c5d9f9] to-60%">
        <div className="flex h-[26px] shrink-0 items-center pl-0.5">
          <Grip />
          <svg viewBox="0 0 18 16" className="mr-2 h-4 w-[18px]">
            <path d="M5.500 2.500h11v12h-11Z" fill="#fff" stroke="#4a6fb8" />
            <rect x="1.500" y=".5" width="11" height="11" fill="#dbe7fb" stroke="#4a6fb8" />
            <path d="M3.500 3h3v3h-3ZM9.500 3v4h-4v3h5" fill="none" stroke="#2d56a8" />
          </svg>
          <nav className="flex gap-[13px] text-xs text-[#14223c]">
            {menus.map((menu) => {
              const at = menu === 'Format' ? 1 : 0;
              return (
                <a key={menu} href="#">
                  {menu.slice(0, at)}
                  <u>{menu[at]}</u>
                  {menu.slice(at + 1)}
                </a>
              );
            })}
          </nav>
          <div className="ml-auto flex h-5 w-[172px] bg-white">
            <input aria-label="Type a question for help" placeholder="Type a question for help" className="min-w-0 flex-1 px-1 pb-0.5 text-xs placeholder:text-[#777]" />
            <button aria-label="Recent questions" className="flex w-2.5 items-center justify-center bg-[#c3d8fa]">
              <Caret />
            </button>
          </div>
        </div>
        <div className="flex flex-col gap-0.5 pl-[3px]">
          <StandardBar />
          <FormattingBar />
        </div>
      </div>

      <div className="flex min-h-0 flex-1 bg-[#a3c1f5]">
        <div className="flex pb-2 pl-[7px] pr-[9px] pt-1.5">
          <ShapesPanel />
        </div>
        <main className="flex w-[943px] shrink-0 flex-col border-t border-[#777] bg-white">
          <div className="flex min-h-0 flex-1">
            <div className="flex min-w-0 flex-1 flex-col">
              <div className="flex h-4 shrink-0 border-b border-[#333] text-[#222]">
                <svg viewBox="0 0 17 15" className="h-full w-[17px] shrink-0 border-r border-[#333]">
                  <path d="M9 0v15M0 7h17" stroke="#3b72d8" strokeDasharray="1 1" />
                </svg>
                <div className="min-w-0 flex-1">
                  <HRuler />
                </div>
              </div>
              <div className="flex min-h-0 flex-1">
                <div className="w-[17px] shrink-0 border-r border-[#333]">
                  <VRuler />
                </div>
                <div className="relative min-w-0 flex-1">
                  <Canvas />
                  <SizePosition />
                </div>
              </div>
            </div>
            <div className="flex bg-[#f0f0f0]">
              <VScroll thumb="mt-[208px] h-[112px]" />
            </div>
          </div>
          <PageTabs />
        </main>
        <TaskPane />
      </div>

      <footer className="flex h-5 shrink-0 items-end gap-[5px] border-t border-[#9aa5b5] bg-[#f0f0f0] pl-[3px] text-xs text-[#222]">
        {statusCells.map((cell) => (
          <div key={cell} className="h-4 w-[176px] border-x border-t border-[#cfcfcf] pr-3 text-center leading-4">
            {cell}
          </div>
        ))}
        <div className="ml-auto h-4 w-20 border-l border-t border-[#cfcfcf] text-right leading-4">Page 1/1</div>
      </footer>

      <DrawingToolbar />
      <LineDialog />
    </div>
  );
}
